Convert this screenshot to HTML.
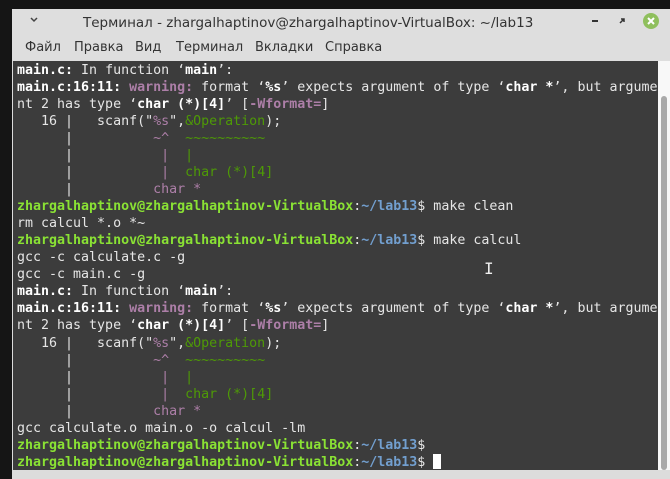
<!DOCTYPE html>
<html><head><meta charset="utf-8"><style>
body{margin:0;width:670px;height:470px;overflow:hidden;background:#151515;position:relative;font-family:"Liberation Sans","DejaVu Sans",sans-serif}
.win{position:absolute;left:12px;top:9px;width:660px;height:470px;background:#dcdcdc}
.title{position:absolute;left:0;top:0;width:660px;height:29px;background:#dedede;font-size:14px;color:#333}
.title .t{position:absolute;left:71px;top:6px;font-family:"DejaVu Sans",sans-serif;font-size:13.5px}
.menu{position:absolute;left:0;top:29px;width:660px;height:23px;background:#dedede;font-family:"DejaVu Sans",sans-serif;font-size:13px;color:#333}
.menu span{position:absolute;top:2px}
.term{position:absolute;left:13px;top:61px;width:645px;height:409px;background:#3c3c3c}
.gut{position:absolute;left:658px;top:61px;width:12px;height:409px;background:#f8f8f8}
.thumb{position:absolute;left:661px;top:96px;width:6px;height:374px;background:#a9a9a9;border-radius:3px}
pre{position:absolute;left:17px;top:62px;margin:0;font-family:"DejaVu Sans Mono","Liberation Mono",monospace;font-size:13.3px;line-height:17.03px;color:#e6e6e6}
b{color:#fff}
.g{color:#8ae234;font-weight:bold}
.bl{color:#729fcf;font-weight:bold}
.p{color:#ad7fa8;font-weight:bold}
.pn{color:#ad7fa8}
.gr{color:#4e9a06}
.cur{display:inline-block;width:8px;height:15px;background:#fff;vertical-align:-3px}
</style></head><body>
<div class="win">
<div class="title"><span class="t">Терминал - zhargalhaptinov@zhargalhaptinov-VirtualBox: ~/lab13</span></div>
<div class="menu"><span style="left:13px">Файл</span><span style="left:62px">Правка</span><span style="left:123px">Вид</span><span style="left:164px">Терминал</span><span style="left:243px">Вкладки</span><span style="left:313px">Справка</span></div>
</div>
<svg style="position:absolute;left:0;top:0" width="670" height="40">
<path d="M31 18 L34 21 L37 18" stroke="#444" stroke-width="1.5" fill="none"/>
<rect x="592" y="20" width="6" height="2" fill="#333"/>
<path d="M620 23 L624 19 M621 19 L624 19 L624 22" stroke="#333" stroke-width="1.5" fill="none"/>
<circle cx="651" cy="21" r="8" fill="#8fbf5d"/>
<path d="M648 18 L654 24 M654 18 L648 24" stroke="#fff" stroke-width="2"/>
</svg>
<div class="term"></div>
<div class="gut"></div><div class="thumb"></div>
<pre><b>main.c:</b> In function ‘<b>main</b>’:
<b>main.c:16:11:</b> <span class="p">warning: </span>format ‘<b>%s</b>’ expects argument of type ‘<b>char *</b>’, but argume
nt 2 has type ‘<b>char (*)[4]</b>’ [<span class="p">-Wformat=</span>]
   16 |   scanf("<span class="pn">%s</span>",<span class="gr">&amp;Operation</span>);
      |          <span class="pn">~^</span>  <span class="gr">~~~~~~~~~~</span>
      |           <span class="pn">|</span>  <span class="gr">|</span>
      |           <span class="pn">|</span>  <span class="gr">char (*)[4]</span>
      |          <span class="pn">char *</span>
<span class="g">zhargalhaptinov@zhargalhaptinov-VirtualBox</span>:<span class="bl">~/lab13</span>$ make clean
rm calcul *.o *~
<span class="g">zhargalhaptinov@zhargalhaptinov-VirtualBox</span>:<span class="bl">~/lab13</span>$ make calcul
gcc -c calculate.c -g
gcc -c main.c -g
<b>main.c:</b> In function ‘<b>main</b>’:
<b>main.c:16:11:</b> <span class="p">warning: </span>format ‘<b>%s</b>’ expects argument of type ‘<b>char *</b>’, but argume
nt 2 has type ‘<b>char (*)[4]</b>’ [<span class="p">-Wformat=</span>]
   16 |   scanf("<span class="pn">%s</span>",<span class="gr">&amp;Operation</span>);
      |          <span class="pn">~^</span>  <span class="gr">~~~~~~~~~~</span>
      |           <span class="pn">|</span>  <span class="gr">|</span>
      |           <span class="pn">|</span>  <span class="gr">char (*)[4]</span>
      |          <span class="pn">char *</span>
gcc calculate.o main.o -o calcul -lm
<span class="g">zhargalhaptinov@zhargalhaptinov-VirtualBox</span>:<span class="bl">~/lab13</span>$
<span class="g">zhargalhaptinov@zhargalhaptinov-VirtualBox</span>:<span class="bl">~/lab13</span>$ <span class="cur"></span></pre>
<div style="position:absolute;left:484px;top:259px;color:#eee;font-size:16px;font-family:'DejaVu Sans Mono',monospace">I</div>
</body></html>
